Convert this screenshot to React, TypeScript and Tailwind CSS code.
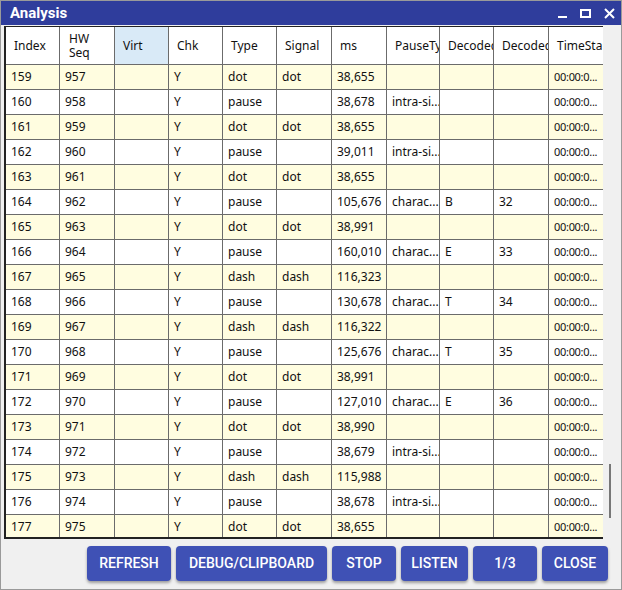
const rows: string[][] = [
  ['159', '957', 'dot', 'dot', '38,655', '', '', ''],
  ['160', '958', 'pause', '', '38,678', 'intra-si...', '', ''],
  ['161', '959', 'dot', 'dot', '38,655', '', '', ''],
  ['162', '960', 'pause', '', '39,011', 'intra-si...', '', ''],
  ['163', '961', 'dot', 'dot', '38,655', '', '', ''],
  ['164', '962', 'pause', '', '105,676', 'charac...', 'B', '32'],
  ['165', '963', 'dot', 'dot', '38,991', '', '', ''],
  ['166', '964', 'pause', '', '160,010', 'charac...', 'E', '33'],
  ['167', '965', 'dash', 'dash', '116,323', '', '', ''],
  ['168', '966', 'pause', '', '130,678', 'charac...', 'T', '34'],
  ['169', '967', 'dash', 'dash', '116,322', '', '', ''],
  ['170', '968', 'pause', '', '125,676', 'charac...', 'T', '35'],
  ['171', '969', 'dot', 'dot', '38,991', '', '', ''],
  ['172', '970', 'pause', '', '127,010', 'charac...', 'E', '36'],
  ['173', '971', 'dot', 'dot', '38,990', '', '', ''],
  ['174', '972', 'pause', '', '38,679', 'intra-si...', '', ''],
  ['175', '973', 'dash', 'dash', '115,988', '', '', ''],
  ['176', '974', 'pause', '', '38,678', 'intra-si...', '', ''],
  ['177', '975', 'dot', 'dot', '38,655', '', '', ''],
];

const cols = 'grid grid-cols-[54px_55px_54px_54px_54px_55px_55px_53px_54px_55px_56px]';
const cell = 'border-r border-[#6b6b6b] px-[5px] overflow-hidden whitespace-nowrap';

const buttons: [string, number][] = [
  ['REFRESH', 84], ['DEBUG/CLIPBOARD', 151], ['STOP', 64], ['LISTEN', 67], ['1/3', 64], ['CLOSE', 66],
];

export default function App() {
  return (
    <div className="w-[622px] h-[590px] bg-[#f0f0f0] flex flex-col border border-[#9a9a9a] text-[#111]" style={{ fontFamily: '"Noto Sans", sans-serif' }}>
      <div className="h-[24px] bg-[#2f3d9c] flex items-center justify-between pl-[9px] pr-[6px] text-white shrink-0">
        <span className="font-bold text-[15px]" style={{ fontFamily: 'Roboto, sans-serif' }}>Analysis</span>
        <div className="flex items-center gap-[13px] font-bold">
          <span className="w-[9px] h-[2px] bg-white mt-[8px]" />
          <span className="w-[11px] h-[9px] border-2 border-white" />
          <svg width="11" height="11" viewBox="0 0 11 11"><path d="M1 1L10 10M10 1L1 10" stroke="white" strokeWidth="2" /></svg>
        </div>
      </div>
      <div className="flex mx-[3px] mt-[1px]">
        <div className="w-[600px] h-[513px] border-l-2 border-t border-b-2 border-[#222] bg-white text-[12px] overflow-hidden">
          <div className={`${cols} h-[38px] border-b border-[#6b6b6b]`}>
            {['Index', 'HW\nSeq', 'Virt', 'Chk', 'Type', 'Signal', 'ms', 'PauseTyp', 'Decoded', 'Decoded', 'TimeStar'].map((h, i) => (
              <div key={i} className={`${cell} flex items-center leading-[14px] ${i === 1 ? 'pl-[9px] whitespace-pre' : 'pl-[8px]'} ${i === 2 ? 'bg-[#d9eaf7]' : ''}`}>{h}</div>
            ))}
          </div>
          {rows.map((r, i) => (
            <div key={i} className={`${cols} h-[25px] border-b border-[#6b6b6b] ${i % 2 === 0 ? 'bg-[#fffde0]' : 'bg-white'}`}>
              {[r[0], r[1], '', 'Y', r[2], r[3], r[4], r[5], r[6], r[7]].map((v, j) => (
                <div key={j} className={`${cell} flex items-center`}>{v}</div>
              ))}
              <div className={`${cell} flex items-center text-[11px] tracking-[-0.3px]`}>00:00:0...</div>
            </div>
          ))}
        </div>
        <div className="w-[15px] h-[513px] bg-[#f0f0f0] relative">
          <div className="absolute left-[6px] top-[438px] w-[2px] h-[54px] bg-[#777]" />
        </div>
      </div>
      <div className="flex justify-end gap-[5px] pr-[13px] mt-[7px]" style={{ fontFamily: 'Roboto, sans-serif' }}>
        {buttons.map(([t, w]) => (
          <button key={t} className="h-[35px] rounded-[4px] bg-[#3f51b5] text-white text-[14px] font-medium shadow-[0_2px_3px_rgba(0,0,0,0.35)]" style={{ width: w }}>{t}</button>
        ))}
      </div>
    </div>
  );
}
